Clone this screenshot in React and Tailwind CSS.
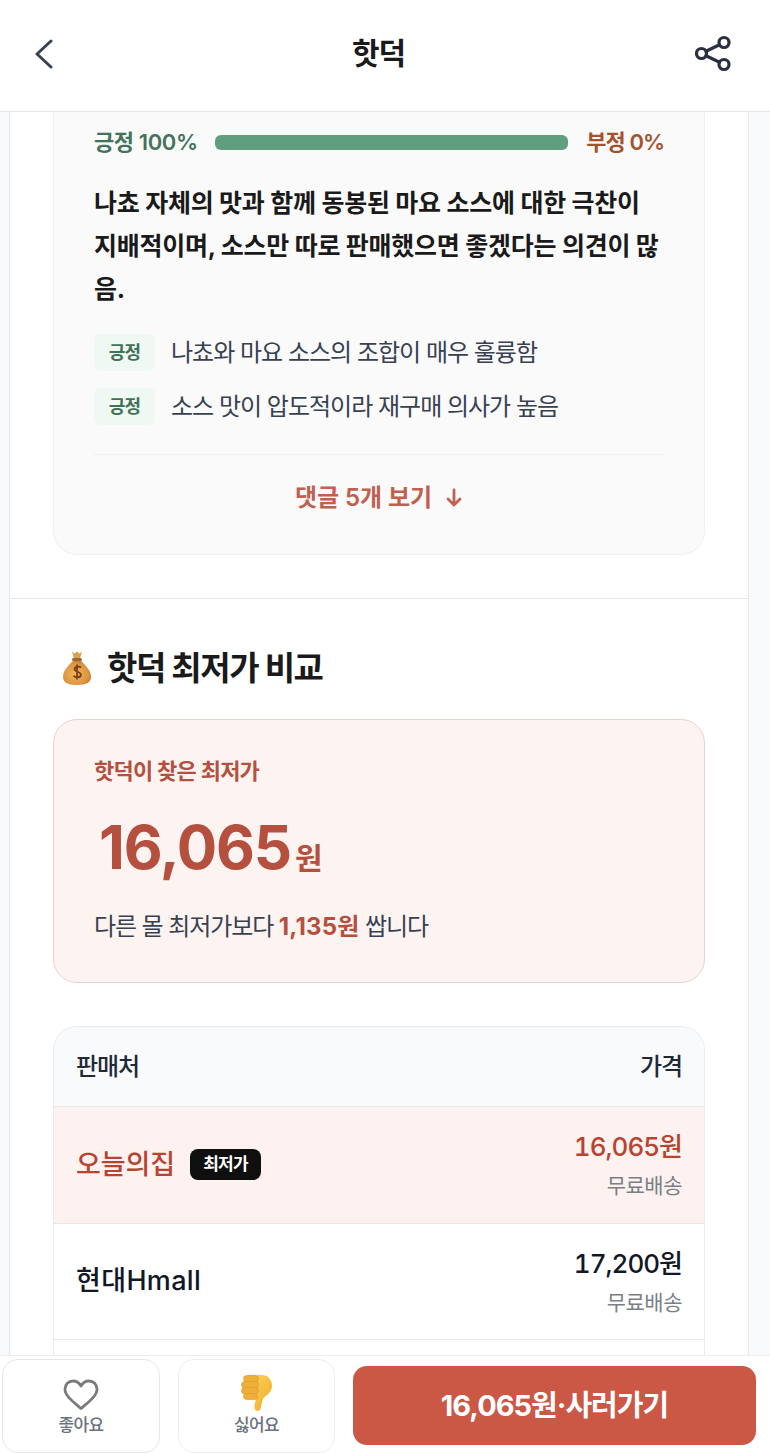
import React from "react";

const font = { fontFamily: 'Inter, "Noto Sans CJK KR", sans-serif' };

function Bag() {
  return (
    <svg width="34" height="36" viewBox="0 0 34 36" className="shrink-0">
      <defs>
        <radialGradient id="bag" cx="45%" cy="55%" r="65%">
          <stop offset="0%" stopColor="#f2b85a" />
          <stop offset="70%" stopColor="#dd9440" />
          <stop offset="100%" stopColor="#b8702c" />
        </radialGradient>
      </defs>
      <path d="M12 1.5l2.5 2 2.5-2 2.5 2 2.5-2-2 7h-6z" fill="#d9a24e" />
      <rect x="12" y="8" width="10" height="3" rx="1.5" fill="#9c6a30" />
      <path d="M13 11C9 15 3 20 3 27c0 5 4 8 14 8s14-3 14-8c0-7-6-12-10-16z" fill="url(#bag)" />
      <path d="M21 17.5c-1-1-6-1.500-6.500 1.500s7 2.500 6.500 6c-.5 3-5.500 2.500-7.500 1M17 14.500v15" fill="none" stroke="#7a3f1a" strokeWidth="1.800" />
    </svg>
  );
}

function ThumbDown() {
  return (
    <svg width="32" height="38" viewBox="0 0 32 38" className="shrink-0">
      <defs>
        <linearGradient id="th" x1="0" y1="0" x2="1" y2="1">
          <stop offset="0%" stopColor="#fdd858" />
          <stop offset="100%" stopColor="#f0aa2e" />
        </linearGradient>
      </defs>
      <path d="M8 1h13c6 0 10 5 10 10.500 0 5-3 8.500-7.500 11.500-1.500 1-2 3-2.500 5.500l-1.500 6.500c-.7 2.500-5.500 2.500-6 -.5-.4-3 1-7 1.500-10.500C15 22 8 24 6 22z" fill="url(#th)" />
      <g fill="#eeae3a" stroke="#dd9a2c" strokeWidth=".6">
        <rect x="2.500" y="1.500" width="15" height="6.500" rx="3.200" />
        <rect x="0.500" y="7.500" width="17" height="6.500" rx="3.200" />
        <rect x="0.500" y="13.500" width="17" height="6.500" rx="3.200" />
        <rect x="2.500" y="19.500" width="14" height="6" rx="3" />
      </g>
    </svg>
  );
}

function Badge() {
  return (
    <span className="flex h-[37px] w-[61px] shrink-0 items-center justify-center rounded-md bg-[#f0f8f3] text-[18px] font-semibold tracking-[-0.8px] text-[#3f7256]">
      긍정
    </span>
  );
}

function Row({ name, price, hot }) {
  return (
    <div className={`flex h-[116.5px] items-center justify-between border-b border-[#e5e7eb] px-[22px] ${hot ? "bg-[#fdf2f0]" : "bg-white"}`}>
      <div className="flex items-center gap-[15px]">
        <span className={`text-[27px] font-medium ${hot ? "tracking-[-0.1px] text-[#b8432f]" : "tracking-[0.35px] text-[#111827]"}`}>{name}</span>
        {hot && (
          <span className="flex h-[31px] w-[71px] items-center justify-center rounded-lg bg-[#0f0f0f] text-[17px] font-bold tracking-[-0.8px] text-white">
            최저가
          </span>
        )}
      </div>
      <div className="flex flex-col items-end gap-[8px] pt-[3px]">
        <span className={`text-[26px] leading-[32px] font-medium tracking-[-1px] tabular-nums ${hot ? "text-[#b8432f]" : "text-[#111827]"}`}>{price}</span>
        <span className="text-[21px] leading-[30px] tracking-[-0.5px] text-[#7a7f87]">무료배송</span>
      </div>
    </div>
  );
}

export default function App() {
  return (
    <div style={font} className="flex h-[1454px] w-[770px] flex-col overflow-hidden bg-[#f9fafb]">
      <header className="flex h-[112px] shrink-0 items-center justify-between border-b border-[#e5e7eb] bg-white pr-[38px] pb-[4px] pl-[34px]">
        <svg width="20" height="30" viewBox="0 0 20 30" fill="none" stroke="#374151" strokeWidth="3" strokeLinecap="round" strokeLinejoin="round">
          <path d="M17 2 3 15l14 13" />
        </svg>
        <h1 className="ml-[8px] text-[30px] font-bold tracking-[-1px] text-[#1a1a1a]">핫덕</h1>
        <svg width="37" height="37" viewBox="0 0 37 37" fill="none" stroke="#2b3040" strokeWidth="3.200" strokeLinecap="round" strokeLinejoin="round">
          <circle cx="29" cy="7.500" r="5" />
          <circle cx="6.500" cy="18.500" r="5" />
          <circle cx="29" cy="29.500" r="5" />
          <path d="m11 16.300 13.500-6.600M11 20.700l13.500 6.600" />
        </svg>
      </header>

      <main className="ml-[9px] min-h-0 w-[740px] flex-1 overflow-hidden border-x border-[#e5e7eb] bg-white">
        <section className="border-b border-[#e5e7eb] px-[43px] pb-[43px]">
          <div className="rounded-b-[24px] border-x border-b border-[#f0f0f0] bg-[#fafafa] px-[40px] pb-[38px]">
            <div className="flex h-[60px] items-center">
              <span className="w-[121px] shrink-0 text-[22px] font-semibold tracking-[-0.4px] text-[#44725a]">긍정 100%</span>
              <div className="h-[15px] flex-1 rounded-md bg-[#5f9f7f]" />
              <span className="w-[96px] shrink-0 text-right text-[22px] font-semibold tracking-[-1px] text-[#a5522c]">부정 0%</span>
            </div>
            <p className="mt-[10px] text-[25px] leading-[43px] font-bold tracking-[-0.25px] text-[#1a1a1a]">
              나쵸 자체의 맛과 함께 동봉된 마요 소스에 대한 극찬이 지배적이며, 소스만 따로 판매했으면 좋겠다는 의견이 많음.
            </p>
            <ul className="mt-[23px] flex flex-col gap-[17px]">
              <li className="flex items-center gap-4">
                <Badge />
                <span className="text-[24px] tracking-[-1px] text-[#374151]">나쵸와 마요 소스의 조합이 매우 훌륭함</span>
              </li>
              <li className="flex items-center gap-4">
                <Badge />
                <span className="text-[24px] tracking-[-1px] text-[#374151]">소스 맛이 압도적이라 재구매 의사가 높음</span>
              </li>
            </ul>
            <div className="mt-[29px] border-t border-[#f0f0f0] pt-[25px]">
              <button className="flex w-full items-center justify-center gap-[13px] text-[24px] leading-[36px] font-semibold tracking-[-0.1px] text-[#c0604f]">
                댓글 5개 보기
                <svg width="18" height="20" viewBox="0 0 18 20" fill="none" stroke="#c0604f" strokeWidth="2.800" strokeLinecap="round" strokeLinejoin="round">
                  <path d="M9 2v15M3 11l6 6 6-6" />
                </svg>
              </button>
            </div>
          </div>
        </section>

        <section className="px-[43px]">
          <h2 className="mt-[45px] flex items-center gap-[13px] pl-[7px] text-[33px] leading-[48px] font-bold tracking-[-1.400px] text-[#1a1a1a]">
            <Bag />
            핫덕 최저가 비교
          </h2>
          <div className="mt-[27px] h-[264px] rounded-[24px] border border-[#e8d2cd] bg-[#fdf4f2] px-[40px] pt-[35px]">
            <div className="text-[22px] leading-[32px] font-semibold tracking-[-0.8px] text-[#b5503f]">핫덕이 찾은 최저가</div>
            <div className="mt-[26px] flex items-baseline pl-[5px] font-bold text-[#b5503f]">
              <span className="text-[60px] leading-[68px] tracking-[-1.200px]">16,065</span>
              <span className="ml-1 text-[30px] tracking-[-1px]">원</span>
            </div>
            <p className="mt-[28px] text-[24px] leading-[36px] tracking-[-1.100px] text-[#374151]">
              다른 몰 최저가보다 <b className="font-bold tracking-[0.2px] text-[#b5503f]">1,135원</b> 쌉니다
            </p>
          </div>
          <div className="mt-[43px] overflow-hidden rounded-t-[24px] border-x border-t border-[#e9ecef]">
            <div className="flex h-[80px] items-center justify-between border-b border-[#e5e7eb] bg-[#f8fafc] px-[22px] text-[24px] font-medium tracking-[-1.100px] text-[#1f2937]">
              <span>판매처</span>
              <span>가격</span>
            </div>
            <Row name="오늘의집" price="16,065원" hot />
            <Row name="현대Hmall" price="17,200원" />
            <div className="h-[60px]" />
          </div>
        </section>
      </main>

      <footer className="flex h-[99px] shrink-0 items-center border-t border-[#eceef0] bg-white pr-[14px] pl-[2px]">
        <button className="mt-[2px] flex h-[94px] w-[158px] flex-col items-center rounded-2xl border border-[#e5e7eb] pt-[19px] text-[#6b7280]">
          <svg width="36" height="32" viewBox="0 0 36 32" fill="none" stroke="#7b7b7b" strokeWidth="2.800" strokeLinejoin="round">
            <path d="M18 29.500C11 23.500 2 17 2 10.200 2 5.500 5.500 2 10 2c3.300 0 6.300 1.800 8 5 1.700-3.200 4.700-5 8-5 4.500 0 8 3.500 8 8.200C34 17 25 23.500 18 29.500z" />
          </svg>
          <span className="mt-[2px] text-[17px] leading-[24px] font-medium tracking-[-0.700px]">좋아요</span>
        </button>
        <button className="mt-[2px] ml-[18px] flex h-[94px] w-[157px] flex-col items-center rounded-2xl border border-[#eceef0] pt-[14px] text-[#6b7280]">
          <ThumbDown />
          <span className="mt-[1px] text-[17px] leading-[24px] font-medium tracking-[-0.700px]">싫어요</span>
        </button>
        <button className="ml-[18px] flex h-[79px] flex-1 items-center justify-center rounded-[14px] bg-[#cb5745] pt-[1px] text-[29px] font-bold tracking-[-1px] text-white">
          16,065원·사러가기
        </button>
      </footer>
    </div>
  );
}
